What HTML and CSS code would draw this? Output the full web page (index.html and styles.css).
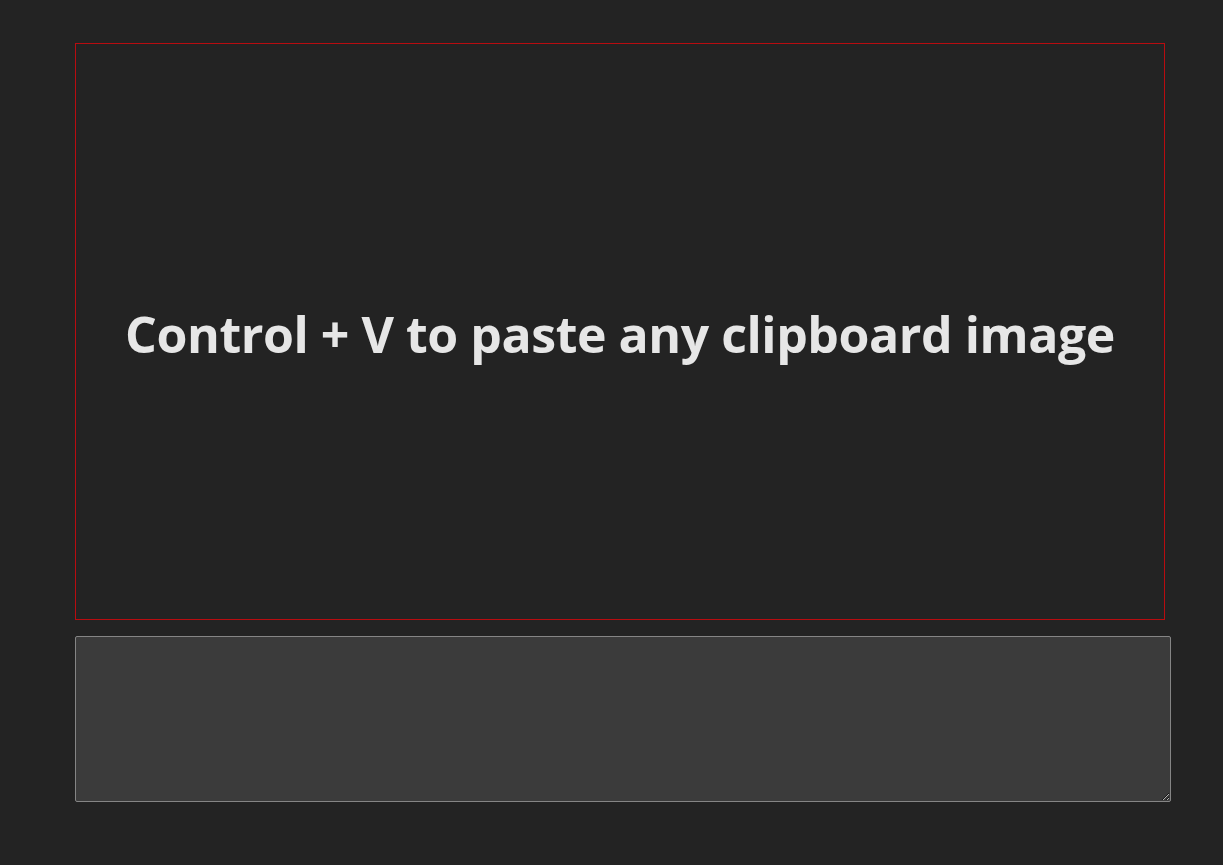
FILE: index.html
```html
<!DOCTYPE html>
<html lang="en">
<head>
<meta charset="utf-8">
<title>Paste image</title>
<link rel="stylesheet" href="styles.css">
</head>
<body>
<main class="page">
  <div class="dropzone">
    <h1 class="hint">Control + V to paste any clipboard image</h1>
  </div>
  <textarea class="output"></textarea>
</main>
</body>
</html>
```
FILE: styles.css
```css
html, body {
  margin: 0;
  padding: 0;
  background: #232323;
}
.page {
  display: flex;
  flex-direction: column;
  align-items: flex-start;
  gap: 16px;
  padding: 43px 0 0 75px;
}
.dropzone {
  box-sizing: border-box;
  width: 1090px;
  height: 577px;
  border: 1px solid #b80c10;
  display: flex;
  align-items: center;
  justify-content: center;
}
.hint {
  margin: 0;
  padding-top: 5px;
  font-family: "Open Sans", "DejaVu Sans", sans-serif;
  font-weight: 700;
  font-size: 50px;
  letter-spacing: -0.45px;
  color: #e6e6e6;
  white-space: nowrap;
}
.output {
  box-sizing: border-box;
  width: 1096px;
  height: 166px;
  margin: 0;
  background: #3b3b3b;
  border: 1px solid #858585;
  border-radius: 2px;
  color: #e6e6e6;
  resize: both;
}
```
